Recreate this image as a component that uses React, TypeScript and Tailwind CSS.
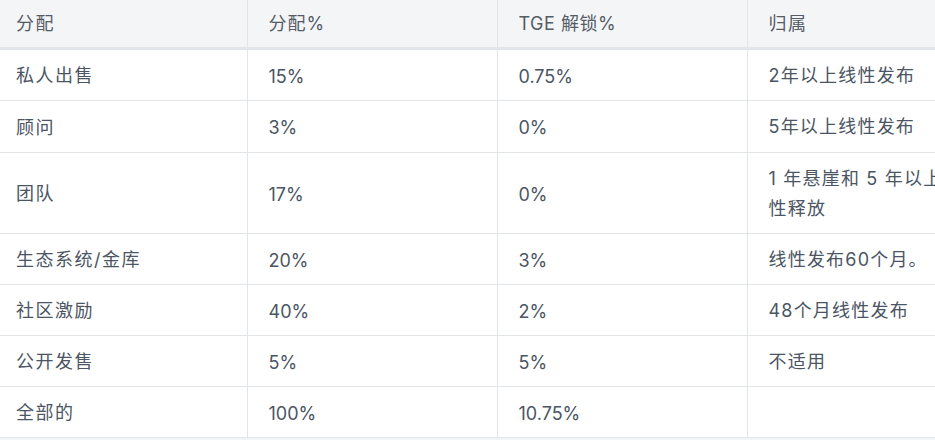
const rows = [
  { name: "私人出售", share: "15%", tge: "0.75%", vesting: "2年以上线性发布" },
  { name: "顾问", share: "3%", tge: "0%", vesting: "5年以上线性发布" },
  { name: "团队", share: "17%", tge: "0%", vesting: "1 年悬崖和 5 年以上线性释放" },
  { name: "生态系统/金库", share: "20%", tge: "3%", vesting: "线性发布60个月。" },
  { name: "社区激励", share: "40%", tge: "2%", vesting: "48个月线性发布" },
  { name: "公开发售", share: "5%", tge: "5%", vesting: "不适用" },
  { name: "全部的", share: "100%", tge: "10.75%", vesting: "" },
];

export default function App() {
  return (
    <div
      className="w-[935px] h-[440px] overflow-hidden bg-[#f3f4f6]"
      style={{ fontFamily: "Inter, 'Noto Sans CJK SC', sans-serif" }}
    >
      <table className="table-fixed border-collapse bg-white text-[18px] text-[#4b5563] w-[993px]">
        <colgroup>
          <col className="w-[247px]" />
          <col className="w-[250px]" />
          <col className="w-[250px]" />
          <col className="w-[246px]" />
        </colgroup>
        <thead>
          <tr className="h-[48px] bg-[#f4f5f7] border-b-[3px] border-[#e2e6ea]">
            <th className="pl-[16px] text-left font-normal tracking-[1.5px] text-[#545c66]">分配</th>
            <th className="pl-[21px] text-left font-normal tracking-[1px] text-[#545c66] border-l border-[#e2e6ea]">分配%</th>
            <th className="pl-[21px] text-left font-normal tracking-[0.5px] text-[#545c66] border-l border-[#e2e6ea]">TGE 解锁%</th>
            <th className="pl-[21px] text-left font-normal tracking-[1.5px] text-[#545c66] border-l border-[#e2e6ea]">归属</th>
          </tr>
        </thead>
        <tbody>
          {rows.map((r, i) => (
            <tr key={r.name} className="border-b border-[#e2e6ea]">
              <td className={`pl-[16px] pt-[3px] leading-[30px] tracking-[1.5px] ${i === 1 ? "h-[52px]" : "h-[51px]"}`}>
                {r.name}
              </td>
              <td className="pl-[21px] pt-[3px] border-l border-[#e2e6ea]">{r.share}</td>
              <td className="pl-[21px] pt-[3px] border-l border-[#e2e6ea]">{r.tge}</td>
              <td className="pl-[21px] pr-[21px] pt-[11px] pb-[9px] leading-[30px] tracking-[1.2px] border-l border-[#e2e6ea]">
                {r.vesting}
              </td>
            </tr>
          ))}
        </tbody>
      </table>
    </div>
  );
}
